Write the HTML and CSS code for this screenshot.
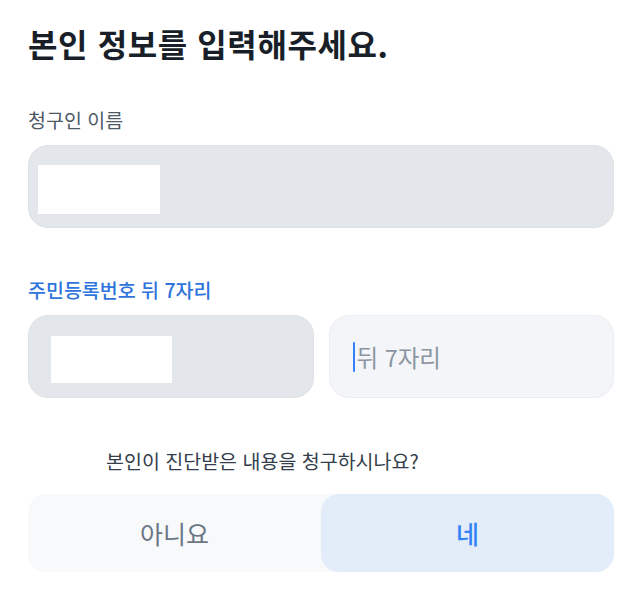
FILE: index.html
```html
<!DOCTYPE html>
<html lang="ko">
<head>
  <meta charset="UTF-8">
  <meta name="viewport" content="width=device-width, initial-scale=1.0">
  <title>본인 정보 입력</title>
  <link rel="stylesheet" href="styles.css">
</head>
<body>

  <h1 class="title">본인 정보를 입력해주세요.</h1>

  <div class="field">
    <label class="label">청구인 이름</label>
    <div class="input input-filled">
      <span class="masked masked-name"></span>
    </div>
  </div>

  <div class="field field-id">
    <label class="label label-active">주민등록번호 뒤 7자리</label>
    <div class="id-row">
      <div class="input input-filled">
        <span class="masked masked-front"></span>
      </div>
      <div class="input input-focus">
        <span class="cursor"></span>
        <span class="placeholder">뒤 7자리</span>
      </div>
    </div>
  </div>

  <p class="question">본인이 진단받은 내용을 청구하시나요?</p>

  <div class="segment">
    <button class="segment-btn">아니요</button>
    <button class="segment-btn selected">네</button>
  </div>

</body>
</html>
```

FILE: styles.css
```css
* {
  margin: 0;
  padding: 0;
  box-sizing: border-box;
}

body {
  font-family: 'Noto Sans CJK KR', 'Noto Sans', sans-serif;
  background-color: #fff;
  color: #333d4b;
  padding: 22px 28px 0 28px;
  display: flex;
  flex-direction: column;
}

.title {
  font-size: 32px;
  font-weight: 700;
  line-height: 42px;
  color: #191f28;
  letter-spacing: 0.6px;
}

.field {
  margin-top: 43px;
  display: flex;
  flex-direction: column;
  gap: 12px;
}

.field-id {
  margin-top: 49px;
}

.label {
  font-size: 19.5px;
  line-height: 26px;
  color: #4e5968;
}

.label-active {
  color: #2f74dc;
  font-weight: 500;
}

.input {
  height: 83px;
  border-radius: 20px;
  border: 1px solid #dfe2e6;
  display: flex;
  align-items: center;
}

.input-filled {
  background-color: #e3e6ea;
}

.input-focus {
  background-color: #f3f5f8;
  border-color: #eaedf1;
  padding-left: 23px;
}

.masked {
  background-color: #fff;
  display: block;
}

.masked-name {
  width: 122px;
  height: 49px;
  margin: 6px 0 0 9px;
}

.masked-front {
  width: 121px;
  height: 47px;
  margin: 6px 0 0 22px;
}

.id-row {
  display: grid;
  grid-template-columns: 1fr 1fr;
  gap: 15px;
}

.cursor {
  width: 2px;
  height: 30px;
  background-color: #3182f6;
  border-radius: 1px;
}

.placeholder {
  font-size: 23.5px;
  color: #8b95a1;
  margin-left: 2px;
}

.question {
  margin-top: 50px;
  padding-left: 78px;
  font-size: 19.5px;
  line-height: 26px;
  color: #333d4b;
}

.segment {
  margin-top: 20px;
  height: 78px;
  background-color: #f7f9fb;
  border-radius: 18px;
  display: grid;
  grid-template-columns: 1fr 1fr;
}

.segment-btn {
  font-family: inherit;
  font-size: 25px;
  border: none;
  background: none;
  color: #6b7684;
  border-radius: 18px;
  cursor: pointer;
}

.segment-btn.selected {
  background-color: #e3edf9;
  color: #3182f6;
  font-weight: 500;
}
```
